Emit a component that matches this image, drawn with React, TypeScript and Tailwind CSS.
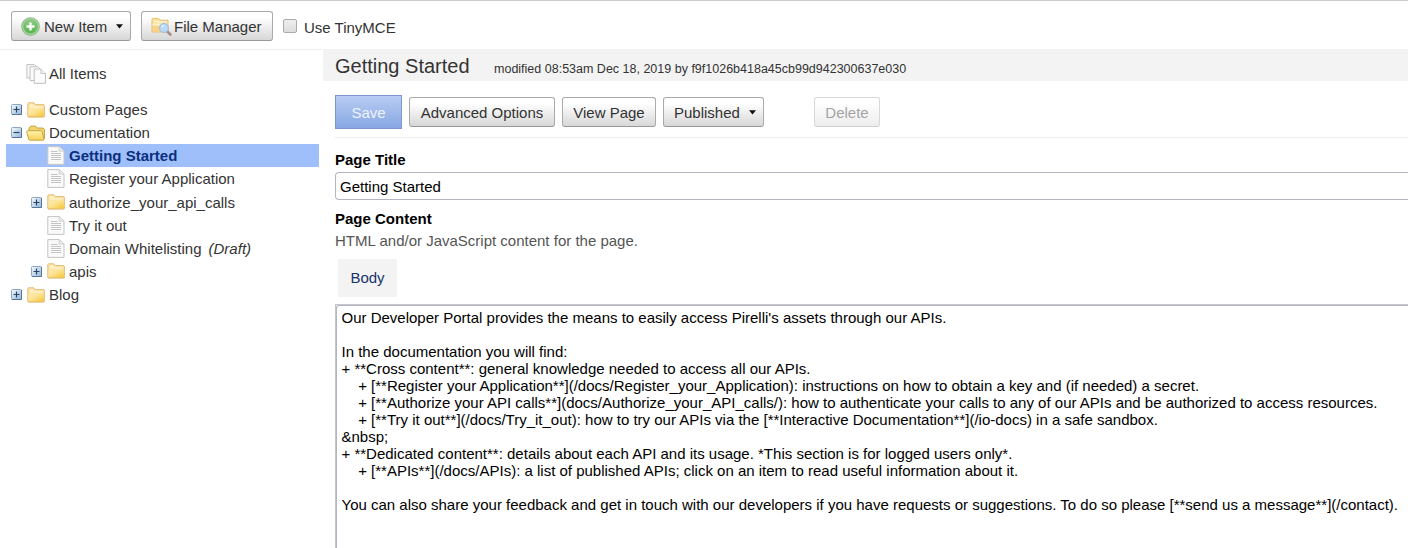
import React from "react";

function AddIcon() {
  return (
    <svg width="19" height="19" viewBox="0 0 18 18" className="shrink-0">
      <defs>
        <linearGradient id="add" x1="0" y1="0" x2="0" y2="1">
          <stop offset="0" stopColor="#8ecb84" />
          <stop offset="1" stopColor="#55b34b" />
        </linearGradient>
      </defs>
      <circle cx="9" cy="9" r="8.4" fill="#a9d4a2" stroke="#79b572" strokeWidth="0.8" />
      <circle cx="9" cy="9" r="6.5" fill="url(#add)" stroke="#6fb267" strokeWidth="0.5" />
      <path d="M9 5.2v7.6M5.2 9h7.6" stroke="#fff" strokeWidth="2.2" />
    </svg>
  );
}

function FileManagerIcon() {
  return (
    <svg width="21" height="19" viewBox="0 0 21 19" className="shrink-0">
      <path d="M1 15V2.2L2 1.4h5.5l1.4 1.8H17V15z" fill="#fae3a2" stroke="#e8bd72" strokeWidth="1" />
      <path d="M3 4.8h13M1.5 7.5h15" stroke="#fff3cf" strokeWidth="1.3" />
      <path d="M2 9h14.5v5.5H2z" fill="#f6d385" />
      <path d="M15.8 14l3.6 3.5" stroke="#a78e82" strokeWidth="2.6" strokeLinecap="round" />
      <circle cx="13" cy="11" r="4.4" fill="#b9daf8" stroke="#a4bede" strokeWidth="1.2" />
      <path d="M10.8 10.6a2.4 2.4 0 0 1 2.4-2.2" stroke="#e6f4ff" strokeWidth="1.2" fill="none" />
    </svg>
  );
}

function PagesIcon() {
  return (
    <svg width="21" height="20" viewBox="0 0 21 20" className="shrink-0">
      <g fill="#fbfbfb" stroke="#c0c0c0" strokeWidth="1">
        <path d="M.9 14V.6h7.6l3 3V14z" />
        <path d="M4 16.5V2.7h7.8l3 3v10.8z" />
        <path d="M8.2 19.3V5h6.8l4.5 4.3v10z" />
        <path d="M15 5v4.4h4.5" />
      </g>
    </svg>
  );
}

function FolderIcon() {
  return (
    <svg width="18" height="16" viewBox="0 0 18.6 16" preserveAspectRatio="none" className="shrink-0">
      <defs>
        <linearGradient id="fold" x1="0" y1="0" x2="1" y2="1">
          <stop offset="0" stopColor="#fff0b8" />
          <stop offset="0.5" stopColor="#fbe08c" />
          <stop offset="1" stopColor="#f5c62e" />
        </linearGradient>
      </defs>
      <path d="M.8 14.3V1.5L1.6.8h5.6l1.3 1.8h8.9l.6.7v11l-.7.7H1.4z" fill="#fbe3a0" stroke="#e6bb78" strokeWidth="1" />
      <path d="M3 3.2h3.8M2.8 5h13.4" stroke="#fff8e2" strokeWidth="1.2" />
      <path d="M1.8 7.6h6.4l1.2-1.4h7.9v8H1.8z" fill="url(#fold)" />
      <path d="M1 14.8h17" stroke="#e7b85d" strokeWidth="0.8" />
    </svg>
  );
}

function OpenFolderIcon() {
  return (
    <svg width="20" height="16" viewBox="0 0 20 16" className="-ml-px shrink-0">
      <defs>
        <linearGradient id="open" x1="0" y1="0" x2="0" y2="1">
          <stop offset="0" stopColor="#fff3a9" />
          <stop offset="1" stopColor="#f6d25a" />
        </linearGradient>
      </defs>
      <path d="M3 12V3l2-2h4.3l1.7 2h6l1.5 1.4V13l-1 1.5z" fill="#f1d46a" stroke="#c7a44a" strokeWidth="1" />
      <path d="M.7 6.7q0-1 1-1h13q1 0 1.3 1l2 7.5q.1 1-.8 1H4q-1 0-1.3-1z" fill="url(#open)" stroke="#c7a44a" strokeWidth="1" />
    </svg>
  );
}

function DocIcon() {
  return (
    <svg width="18" height="19" viewBox="0 0 18 19" className="shrink-0">
      <path d="M.8 18.4V.6h11.6l4.6 4.3v13.5z" fill="#fafafa" stroke="#c4c4c4" strokeWidth="1" />
      <path d="M12.2.8v4.3h4.7" fill="#ededed" stroke="#c8c8c8" strokeWidth="0.8" />
      <path d="M4 5.5h6.5M4 7.5h10M4 9.5h10M4 11.5h10M4 13.5h10" stroke="#c4c4c4" strokeWidth="1" />
    </svg>
  );
}

function Toggle({ open }: { open?: boolean }) {
  return (
    <svg width="11" height="11" viewBox="0 0 11 11" className="shrink-0">
      <defs>
        <linearGradient id="tog" x1="0" y1="0" x2="1" y2="1">
          <stop offset="0" stopColor="#f6fafe" />
          <stop offset="1" stopColor="#94b5d6" />
        </linearGradient>
      </defs>
      <rect x=".5" y=".5" width="10" height="10" rx="1" fill="url(#tog)" stroke="#8fa6c0" />
      <path d="M1 10.5h9.5V1" fill="none" stroke="#56749a" />
      <path d={open ? "M2.5 5.5h6" : "M2.5 5.5h6M5.5 2.5v6"} stroke="#26436c" strokeWidth="1.2" />
    </svg>
  );
}

function Caret() {
  return (
    <svg width="7" height="5" viewBox="0 0 7 5" className="shrink-0">
      <path d="M0 .3h7L3.5 4.6z" fill="#111" />
    </svg>
  );
}

const button =
  "flex h-[30px] shrink-0 items-center whitespace-nowrap rounded-[3px] border border-[#aaa] border-b-[#999] bg-linear-to-b from-white from-20% to-[#d7d7d7] text-[15px] text-[#333]";

type Row = {
  label: string;
  kind: "folder" | "open" | "doc";
  nested?: boolean;
  selected?: boolean;
  draft?: boolean;
};

const rows: Row[] = [
  { label: "Custom Pages", kind: "folder" },
  { label: "Documentation", kind: "open" },
  { label: "Getting Started", kind: "doc", nested: true, selected: true },
  { label: "Register your Application", kind: "doc", nested: true },
  { label: "authorize_your_api_calls", kind: "folder", nested: true },
  { label: "Try it out", kind: "doc", nested: true },
  { label: "Domain Whitelisting", kind: "doc", nested: true, draft: true },
  { label: "apis", kind: "folder", nested: true },
  { label: "Blog", kind: "folder" },
];

function TreeRow({ row }: { row: Row }) {
  return (
    <div
      className={`flex h-[23.125px] items-center ${row.nested ? "pl-[25px]" : "pl-[5px]"} ${
        row.selected ? "bg-[#9fbffb] font-bold text-[#0b2f7c]" : ""
      }`}
    >
      <span className="flex w-4 shrink-0">{row.kind !== "doc" && <Toggle open={row.kind === "open"} />}</span>
      <span className="flex w-[22px] shrink-0">
        {row.kind === "folder" && <FolderIcon />}
        {row.kind === "open" && <OpenFolderIcon />}
        {row.kind === "doc" && <DocIcon />}
      </span>
      <span>{row.label}</span>
      {row.draft && <em className="ml-[7px]">(Draft)</em>}
    </div>
  );
}

const content = [
  "Our Developer Portal provides the means to easily access Pirelli's assets through our APIs.",
  "",
  "In the documentation you will find:",
  "+ **Cross content**: general knowledge needed to access all our APIs.",
  "    + [**Register your Application**](/docs/Register_your_Application): instructions on how to obtain a key and (if needed) a secret.",
  "    + [**Authorize your API calls**](docs/Authorize_your_API_calls/): how to authenticate your calls to any of our APIs and be authorized to access resources.",
  "    + [**Try it out**](/docs/Try_it_out): how to try our APIs via the [**Interactive Documentation**](/io-docs) in a safe sandbox.",
  "&nbsp;",
  "+ **Dedicated content**: details about each API and its usage. *This section is for logged users only*.",
  "    + [**APIs**](/docs/APIs): a list of published APIs; click on an item to read useful information about it.",
  "",
  "You can also share your feedback and get in touch with our developers if you have requests or suggestions. To do so please [**send us a message**](/contact).",
];

export default function App() {
  return (
    <div className="flex h-[548px] w-[1408px] flex-col overflow-hidden border-t border-[#ccc] bg-white font-['Liberation_Sans',Arial,sans-serif] text-[15px] leading-[17px] text-[#333]">
      <header className="flex h-12 shrink-0 items-start pl-[11px] pt-[10px]">
        <button className={`${button} w-[120px] pl-[9px]`}>
          <AddIcon />
          <span className="ml-1">New Item</span>
          <span className="ml-[9px]"><Caret /></span>
        </button>
        <button className={`${button} ml-[10px] w-[132px] pl-[9px]`}>
          <FileManagerIcon />
          <span className="ml-[2px]">File Manager</span>
        </button>
        <span className="ml-[10px] mt-2 h-[14px] w-[14px] rounded-[2px] border border-[#aaa] bg-linear-to-b from-[#eee] to-[#ddd]" />
        <span className="ml-[7px] mt-2">Use TinyMCE</span>
      </header>
      <div className="flex min-h-0 flex-1">
        <aside className="w-[323px] shrink-0 border-t border-[#eee] pl-[6px] pr-1">
          <div className="flex h-[48px] items-center pb-px pl-5">
            <PagesIcon />
            <span className="ml-[2px]">All Items</span>
          </div>
          <nav>
            {rows.map((row) => (
              <TreeRow key={row.label} row={row} />
            ))}
          </nav>
        </aside>
        <main className="flex min-w-0 flex-1 flex-col">
          <div className="flex h-8 shrink-0 items-center bg-[#f3f3f3] pl-3">
            <h1 className="pt-[2px] text-[20px] leading-[30px]">Getting Started</h1>
            <span className="ml-[24.5px] mt-2 text-[12.5px]">
              modified 08:53am Dec 18, 2019 by f9f1026b418a45cb99d942300637e030
            </span>
          </div>
          <div className="flex min-h-0 flex-1 flex-col pl-3">
            <div className="flex h-[57px] shrink-0 items-center border-b border-[#eee] pt-[5px]">
              <button className="h-[34px] w-[67px] border border-[#7d98cc] bg-linear-to-b from-[#b9ccf3] to-[#87a7e3] pt-[2px] text-[15px] text-[#eef3ff]">
                Save
              </button>
              <button className={`${button} ml-[7px] w-[146px] justify-center pt-[2px]`}>Advanced Options</button>
              <button className={`${button} ml-[7px] w-[94px] justify-center pt-[2px]`}>View Page</button>
              <button className={`${button} ml-[7px] w-[101px] pl-[10px] pt-[2px]`}>
                <span>Published</span>
                <span className="ml-[9px]"><Caret /></span>
              </button>
              <button className={`${button} ml-[50px] w-[66px] justify-center pt-[2px] opacity-45`}>Delete</button>
            </div>
            <label className="mt-[13px] font-bold text-black">Page Title</label>
            <div className="mt-1 flex h-7 shrink-0 items-center rounded-l-[4px] border border-r-0 border-[#b4b4c2] pl-1 text-[15px] text-black">
              Getting Started
            </div>
            <label className="mt-[10px] font-bold text-black">Page Content</label>
            <p className="mt-[5px] text-[#555]">HTML and/or JavaScript content for the page.</p>
            <div className="ml-[3px] mt-[10px] flex h-[38px] w-[59px] shrink-0 items-center justify-center bg-[#f3f3f3] pb-px text-[#17346b]">
              Body
            </div>
            <div className="mt-[7px] min-h-0 flex-1 border-l border-t border-[#c6c6ca]">
              <div className="h-full rounded-tl-[3px] border-l border-t border-[#b2b5c3] pl-[4.5px] pt-[3px] text-[15px] text-black">
                {content.map((line, i) => (
                  <div key={i} className="h-[17px] whitespace-pre">
                    {line}
                  </div>
                ))}
              </div>
            </div>
          </div>
        </main>
      </div>
    </div>
  );
}
